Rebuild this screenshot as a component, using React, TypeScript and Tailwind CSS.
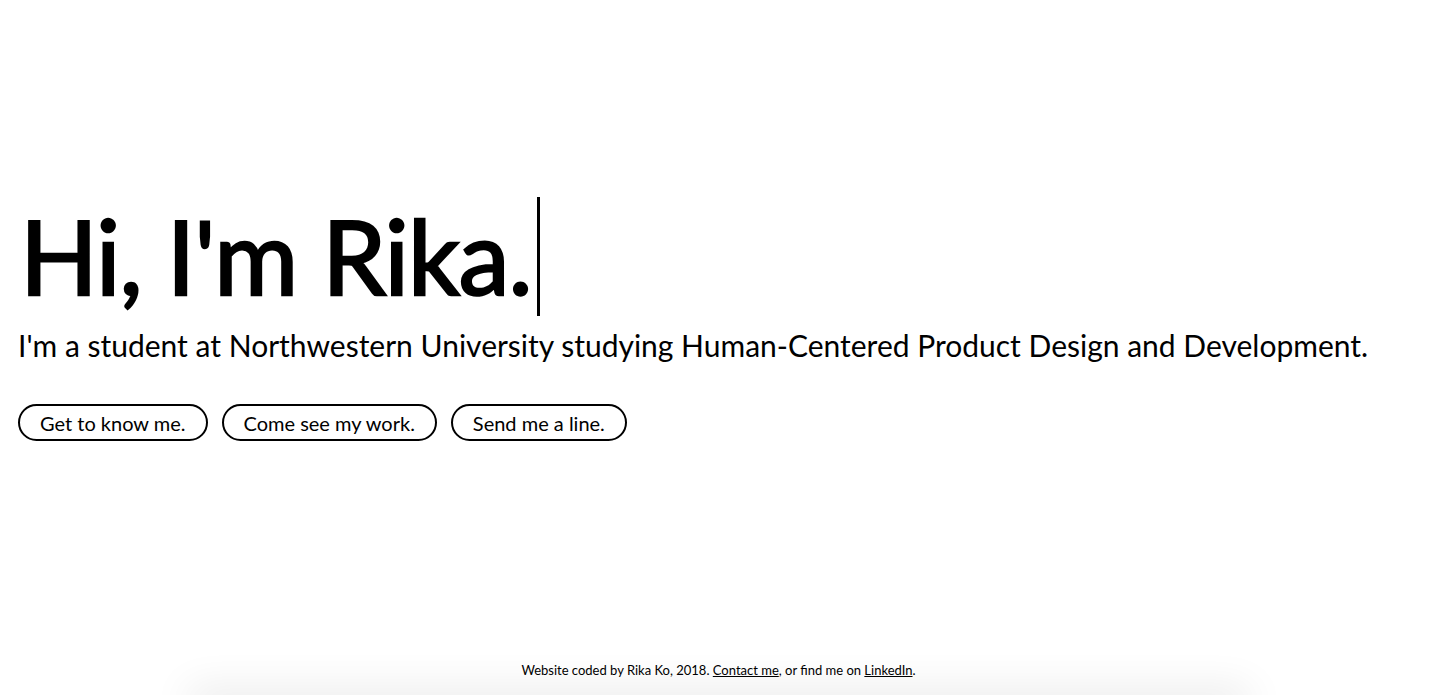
export default function App() {
  const buttons = ["Get to know me.", "Come see my work.", "Send me a line."];

  return (
    <div className="relative flex h-screen flex-col overflow-hidden bg-white text-black [font-family:Lato,'Liberation_Sans',sans-serif]">
      <main className="flex flex-1 flex-col pl-[20px] pt-[195px]">
        <h1 className="flex items-center text-[102px] leading-[122px] font-normal tracking-[-1px] [-webkit-text-stroke:2.4px_black]">
          <span>Hi, I'm Rika.</span>
          <span className="ml-[5px] h-[119px] w-[3px] bg-black" />
        </h1>
        <p className="-ml-[2px] mt-[10px] text-[30px] leading-[36px]">
          I'm a student at Northwestern University studying Human-Centered Product Design and Development.
        </p>
        <div className="-ml-[2px] mt-[41px] flex gap-[14px]">
          {buttons.map((label) => (
            <button
              key={label}
              className="h-[37px] rounded-full border-2 border-black px-[20px] text-[20px] leading-none"
            >
              {label}
            </button>
          ))}
        </div>
      </main>
      <footer className="pb-[17px] text-center text-[13px] leading-[16px]">
        Website coded by Rika Ko, 2018. <a className="underline" href="#contact">Contact me</a>, or find me on{" "}
        <a className="underline" href="#linkedin">LinkedIn</a>.
      </footer>
      <div className="mx-auto -mb-[20px] h-[20px] w-[1060px] shrink-0 shadow-[0_-4px_40px_rgba(0,0,0,0.12)]" />
    </div>
  );
}
